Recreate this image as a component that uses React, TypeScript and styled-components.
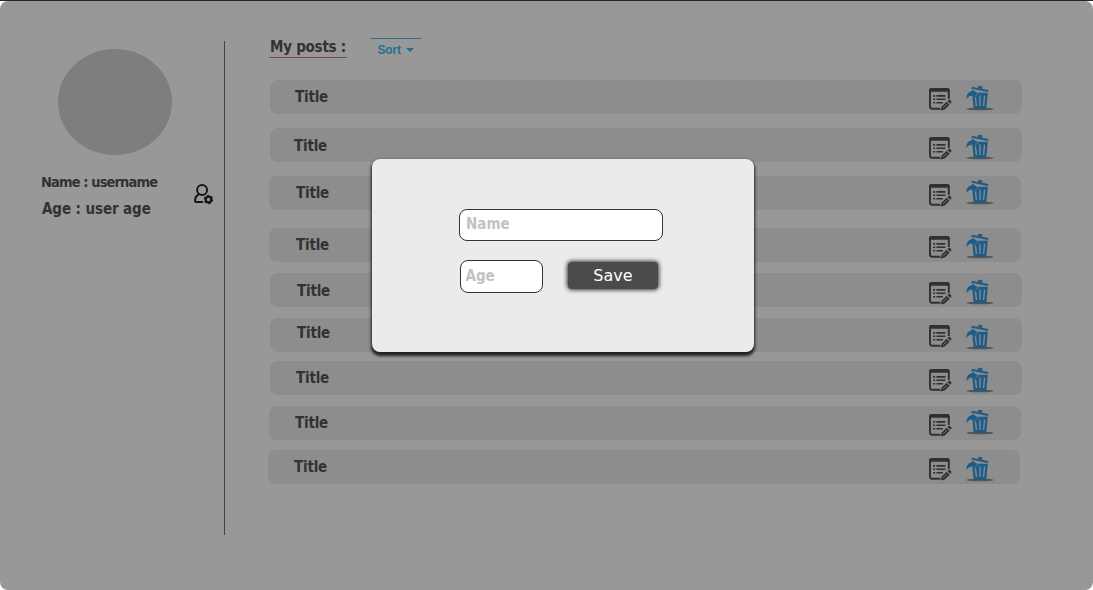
import React from "react";
import styled, { createGlobalStyle } from "styled-components";

const GlobalStyle = createGlobalStyle`
  * { box-sizing: border-box; }
  body { margin: 0; background: #fff; font-family: "DejaVu Sans Condensed", "DejaVu Sans", sans-serif; font-stretch: condensed; }
`;

const Screen = styled.div`
  position: relative;
  width: 1093px;
  height: 590px;
  overflow: hidden;
  border-top: 1px solid #262326;
`;

const Page = styled.div`
  display: flex;
  height: 589px;
  border-radius: 8px;
  background: #989898;
  color: #323232;
`;

const Sidebar = styled.aside`
  width: 225px;
  height: 494px;
  margin-top: 40px;
  padding-top: 8px;
  border-right: 1px solid #444440;
`;

const Avatar = styled.div`
  width: 114px;
  height: 106px;
  margin-left: 57.5px;
  border-radius: 50%;
  background: #7e7e7e;
`;

const Profile = styled.div`
  display: flex;
  align-items: flex-start;
  margin: 15px 0 0 41px;
`;

const ProfileLines = styled.div`
  width: 152px;
`;

const ProfileLine = styled.div<{ $size: number; $indent?: number; $spacing: number }>`
  height: 24px;
  margin: 0 0 3px ${(p) => p.$indent ?? 0}px;
  line-height: 24px;
  font-size: ${(p) => p.$size}px;
  font-weight: 700;
  letter-spacing: ${(p) => p.$spacing}px;
  white-space: nowrap;
`;

const SettingsIcon = styled.svg`
  display: block;
  width: 20px;
  height: 21px;
  margin-top: 14px;
`;

const Content = styled.main`
  padding: 36px 0 0 43px;
`;

const Heading = styled.header`
  display: flex;
  align-items: flex-start;
  height: 43px;
  padding-left: 1px;
`;

const HeadingTitle = styled.h1`
  width: 78px;
  height: 21px;
  margin: 0;
  padding-left: 1px;
  border-bottom: 1px solid #794558;
  font-size: 15px;
  line-height: 20px;
  letter-spacing: -0.25px;
  white-space: nowrap;
`;

const SortButton = styled.button`
  display: flex;
  align-items: center;
  gap: 5px;
  width: 51px;
  height: 23px;
  margin: 1px 0 0 23px;
  padding: 0 0 0 7.5px;
  border: 0;
  border-top: 1px solid #256f91;
  background: none;
  color: #256f91;
  font: 700 12px/20px "Liberation Sans", Arial, sans-serif;
  letter-spacing: -0.2px;
`;

const Caret = styled.span`
  flex: none;
  border: 4px solid transparent;
  border-top: 4px solid #1d6e94;
  border-bottom: 0;
`;

const Row = styled.div<{ $gap: number; $indent: number }>`
  display: flex;
  align-items: flex-start;
  width: 752px;
  height: 34px;
  margin: ${(p) => p.$gap}px 0 0 ${(p) => p.$indent}px;
  border-radius: 8px;
  background: #8d8d8d;
`;

const RowTitle = styled.div<{ $left: number; $top: number; $width: number }>`
  width: ${(p) => p.$width}px;
  height: 24px;
  margin-top: ${(p) => p.$top}px;
  padding-left: ${(p) => p.$left}px;
  font-size: 15px;
  font-weight: 700;
  line-height: 24px;
  letter-spacing: -0.2px;
`;

const EditSvg = styled.svg<{ $top: number }>`
  display: block;
  flex: none;
  width: 24px;
  height: 24px;
  margin-top: ${(p) => p.$top}px;
`;

const TrashSvg = styled.svg<{ $top: number }>`
  display: block;
  flex: none;
  width: 28px;
  height: 26px;
  margin: ${(p) => p.$top}px 0 0 13px;
`;

const Modal = styled.form`
  position: absolute;
  top: 157.5px;
  left: 372px;
  display: flex;
  flex-direction: column;
  gap: 19px;
  width: 382px;
  height: 193.5px;
  padding: 50.5px 0 0 87px;
  border-radius: 8px;
  background: #ebebeb;
  box-shadow: 0 2.5px 3px 1px #222;
`;

const ModalRow = styled.div`
  display: flex;
  align-items: flex-start;
`;

const Field = styled.input<{ $width: number; $height: number; $indent?: number; $inset: number }>`
  width: ${(p) => p.$width}px;
  height: ${(p) => p.$height}px;
  margin: 0 0 0 ${(p) => p.$indent ?? 0}px;
  padding: 0 5px 2px ${(p) => p.$inset}px;
  border: 1px solid #333;
  border-radius: 8px;
  background: #fff;
  font-family: "DejaVu Sans Condensed", "DejaVu Sans", sans-serif;
  font-stretch: condensed;
  font-size: 15px;
  font-weight: 700;
  &::placeholder { color: #c2c2c2; opacity: 1; }
`;

const SaveButton = styled.button`
  width: 90px;
  height: 27px;
  margin: 2px 0 0 25px;
  padding: 0;
  border: 0;
  border-radius: 4px;
  background: #4b4b4b;
  box-shadow: 0 0 4px 1px #333;
  color: #fff;
  font: 400 16px/27px "DejaVu Sans", sans-serif;
  font-stretch: normal;
`;

function UserCog() {
  return (
    <SettingsIcon viewBox="0 0 20 21" fill="none" stroke="#161616" strokeWidth="2">
      <circle cx="9.1" cy="6" r="5" />
      <path d="M6 10.2C3.1 11.8 2 14.2 2 16.8c0 .8.5 1.2 1.2 1.2H9.4" strokeLinecap="round" />
      <circle cx="15.5" cy="15.5" r="2.8" strokeWidth="2.3" />
      <circle cx="15.5" cy="15.5" r="4" strokeWidth="1.4" strokeDasharray="2.1 2.09" />
    </SettingsIcon>
  );
}

function EditIcon({ top }: { top: number }) {
  return (
    <EditSvg $top={top} viewBox="0 0 24 24" fill="none" stroke="#303030">
      <path d="M19.8 11V3.2Q19.8 1 18 1H3.2Q1 1 1 3.2V18.5Q1 20.7 3.2 20.7H11.5" strokeWidth="1.9" />
      <path d="M0 3.8V2.4Q0 .1 2.8.1H18.2Q20.7.1 20.7 2.4V3.8Z" fill="#303030" stroke="none" />
      <path d="M4.2 7.9h2M7.4 7.9h9M4.2 11.3h2M7.4 11.3h9M4.2 14.8h2M7.4 14.8h6.5" strokeWidth="1.6" />
      <path d="M11.8 22.5l1-4 4.8-4.8 3 3-4.9 4.9z" fill="#303030" stroke="none" />
      <path d="M18.5 13l1-1q.8-.7 1.6.1l1 1.1q.8.8 0 1.5l-.9 1z" fill="#303030" stroke="none" />
      <path d="M14.2 19.8l3.8-3.8" stroke="#8d8d8d" strokeWidth=".7" />
    </EditSvg>
  );
}

function TrashIcon({ top }: { top: number }) {
  return (
    <TrashSvg $top={top} viewBox="0 0 28 26">
      <ellipse cx="14" cy="23.9" rx="13.6" ry="1.4" fill="#555" />
      <path d="M6 7.8H21.8L20.3 23.7H7.7z" fill="#1e5b87" />
      <path d="M9.5 12.8l.9 8.2M14 10.6V21M18.5 10.6L17.6 21" stroke="#878e93" strokeWidth="1.3" fill="none" />
      <path d="M5.6 2.8L22.2 6" stroke="#1e5b87" strokeWidth="2" fill="none" />
      <path d="M11.8 3.1l.5-2q.1-.5.6-.4l3.2.6q.5.1.4.6l-.5 2.1z" fill="#1e5b87" />
      <path d="M.4 14C.4 9.4 2.5 6.7 6.1 6.3L5.8 4.5 11.8 8 8 12.3l-.3-1.9C4.5 10.2 2.1 11.2.4 14z" fill="#1e5b87" />
      <path d="M8 12.7l4.2-4.6-4-2.4" stroke="#8d8d8d" strokeWidth=".6" fill="none" />
    </TrashSvg>
  );
}

const posts = [
  { x: 270, y: 80, titleX: 295, titleY: 97, editY: 88, trashY: 85 },
  { x: 270, y: 128, titleX: 294, titleY: 146, editY: 137, trashY: 134 },
  { x: 269, y: 176, titleX: 296, titleY: 193, editY: 184, trashY: 179 },
  { x: 269, y: 228, titleX: 296, titleY: 245, editY: 236, trashY: 233 },
  { x: 270, y: 273, titleX: 297, titleY: 291, editY: 282, trashY: 279 },
  { x: 270, y: 318, titleX: 297, titleY: 333, editY: 325, trashY: 324 },
  { x: 270, y: 361, titleX: 296, titleY: 378, editY: 369, trashY: 367 },
  { x: 269, y: 406, titleX: 295, titleY: 423, editY: 414, trashY: 409 },
  { x: 268, y: 450, titleX: 294, titleY: 467, editY: 458, trashY: 456 },
];

export default function App() {
  return (
    <>
      <GlobalStyle />
      <Screen>
        <Page>
          <Sidebar>
            <Avatar />
            <Profile>
              <ProfileLines>
                <ProfileLine $size={14.5} $spacing={-0.88}>Name : username</ProfileLine>
                <ProfileLine $size={15} $indent={1} $spacing={-0.1}>Age : user age</ProfileLine>
              </ProfileLines>
              <UserCog />
            </Profile>
          </Sidebar>
          <Content>
            <Heading>
              <HeadingTitle>My posts :</HeadingTitle>
              <SortButton>Sort <Caret /></SortButton>
            </Heading>
            {posts.map((post, i) => (
              <Row key={post.y} $gap={i ? post.y - posts[i - 1].y - 34 : 0} $indent={post.x - 268}>
                <RowTitle $left={post.titleX - post.x} $top={post.titleY - post.y - 12} $width={929 - post.x}>
                  Title
                </RowTitle>
                <EditIcon top={post.editY - post.y} />
                <TrashIcon top={post.trashY - post.y} />
              </Row>
            ))}
          </Content>
        </Page>
        <Modal>
          <Field $width={204} $height={32} $inset={6} placeholder="Name" />
          <ModalRow>
            <Field $width={83} $height={33} $indent={1} $inset={4.5} placeholder="Age" />
            <SaveButton type="button">Save</SaveButton>
          </ModalRow>
        </Modal>
      </Screen>
    </>
  );
}
